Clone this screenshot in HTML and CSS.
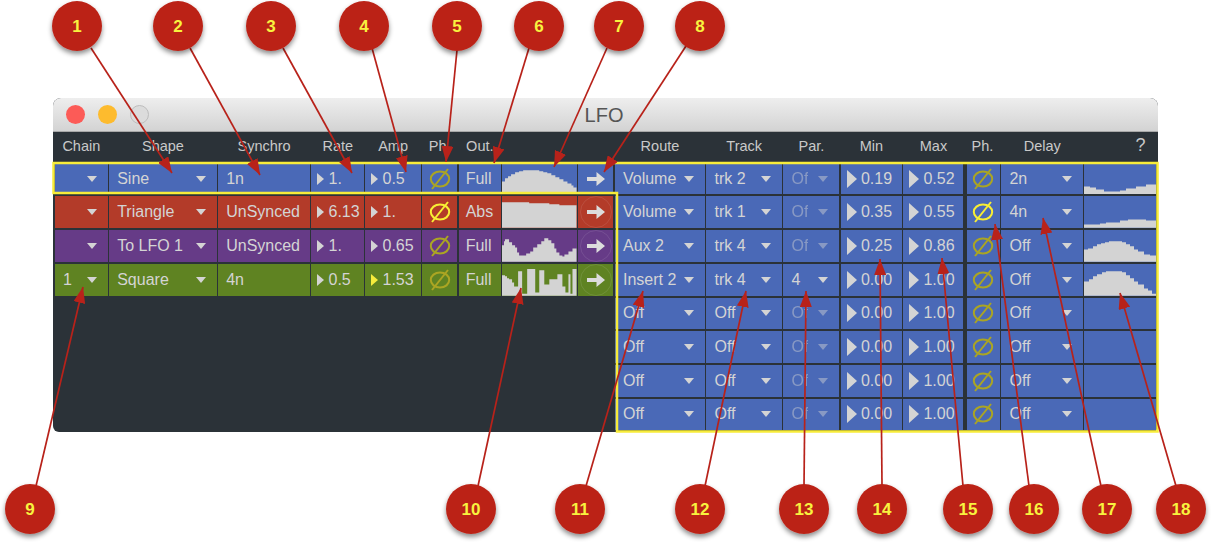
FILE: index.html
```html
<!DOCTYPE html>
<html lang="en">
<head>
    <meta charset="UTF-8">
    <title>LFO</title>
    <link rel="stylesheet" href="styles.css">
</head>
<body>
    <svg class="defs">
        <symbol id="phase" viewBox="0 0 22 22">
            <ellipse cx="11" cy="11" rx="9.2" ry="7.6" fill="none" stroke="currentColor" stroke-width="2"/>
            <line x1="3" y1="21" x2="19" y2="1" stroke="currentColor" stroke-width="2"/>
        </symbol>
        <symbol id="arrow" viewBox="0 0 18 14">
            <path d="M0 5H9.5V0L18 7L9.5 14V9H0Z" fill="currentColor"/>
        </symbol>
    </svg>

    <div class="window">
        <div class="titlebar">
            <span class="light light-red"></span>
            <span class="light light-yellow"></span>
            <span class="light light-off"></span>
            <span class="title">LFO</span>
        </div>
        <div class="panes">
            <div class="grid grid-left">
                <div class="head">Chain</div>
                <div class="head">Shape</div>
                <div class="head">Synchro</div>
                <div class="head">Rate</div>
                <div class="head">Amp</div>
                <div class="head">Ph.</div>
                <div class="head">Out.</div>
                <div class="head"></div>
                <div class="head"></div>

                <div class="cell blue drop"><span></span><i class="tri"></i></div>
                <div class="cell blue drop"><span>Sine</span><i class="tri"></i></div>
                <div class="cell blue"><span>1n</span></div>
                <div class="cell blue num"><i class="play"></i><span>1.</span></div>
                <div class="cell blue num"><i class="play"></i><span>0.5</span></div>
                <div class="cell blue ph"><svg class="ph-icon"><use href="#phase"/></svg></div>
                <div class="cell blue out"><span>Full</span></div>
                <div class="cell blue graph"><svg viewBox="0 0 74 31" preserveAspectRatio="none"><path d="M0 31V18H3V15H6V13H9V11H13V9H17V8H21V7H37V8H41V9H45V10H49V12H53V14H57V16H61V18H65V20H69V22H71V24H74V31Z"/></svg></div>
                <div class="cell blue send"><svg class="send-icon"><use href="#arrow"/></svg></div>

                <div class="cell red drop"><span></span><i class="tri"></i></div>
                <div class="cell red drop"><span>Triangle</span><i class="tri"></i></div>
                <div class="cell red"><span>UnSynced</span></div>
                <div class="cell red num"><i class="play"></i><span>6.13</span></div>
                <div class="cell red num"><i class="play"></i><span>1.</span></div>
                <div class="cell red ph on"><svg class="ph-icon"><use href="#phase"/></svg></div>
                <div class="cell red out"><span>Abs</span></div>
                <div class="cell red graph"><svg viewBox="0 0 74 31" preserveAspectRatio="none"><path d="M0 31V6H27V7H47V8H57V9H74V31Z"/></svg></div>
                <div class="cell red send ring"><svg class="send-icon"><use href="#arrow"/></svg></div>

                <div class="cell purple drop"><span></span><i class="tri"></i></div>
                <div class="cell purple drop"><span>To LFO 1</span><i class="tri"></i></div>
                <div class="cell purple"><span>UnSynced</span></div>
                <div class="cell purple num"><i class="play"></i><span>1.</span></div>
                <div class="cell purple num"><i class="play"></i><span>0.65</span></div>
                <div class="cell purple ph"><svg class="ph-icon"><use href="#phase"/></svg></div>
                <div class="cell purple out"><span>Full</span></div>
                <div class="cell purple graph"><svg viewBox="0 0 74 31" preserveAspectRatio="none"><path d="M0 31V15H2V11H3V9H7V12H10V15H13V17H15V22H17V25H24V23H28V21H31V17H35V14H39V11H42V8H46V10H49V13H52V18H54V22H57V25H60V26H62V24H66V21H70V18H74V31Z"/></svg></div>
                <div class="cell purple send ring"><svg class="send-icon"><use href="#arrow"/></svg></div>

                <div class="cell green drop"><span>1</span><i class="tri"></i></div>
                <div class="cell green drop"><span>Square</span><i class="tri"></i></div>
                <div class="cell green"><span>4n</span></div>
                <div class="cell green num"><i class="play"></i><span>0.5</span></div>
                <div class="cell green num"><i class="play play-on"></i><span>1.53</span></div>
                <div class="cell green ph"><svg class="ph-icon"><use href="#phase"/></svg></div>
                <div class="cell green out"><span>Full</span></div>
                <div class="cell green graph"><svg viewBox="0 0 74 31" preserveAspectRatio="none"><path d="M0 31V11H3V12H5V14H7V15H10V18H12V22H16V7H20V29H25V5H33V28H37V6H42V20H47V15H55V10H60V22H63V28H66V10H68V29H70V5H74V31Z"/></svg></div>
                <div class="cell green send ring"><svg class="send-icon"><use href="#arrow"/></svg></div>
            </div>

            <div class="grid grid-right">
                <div class="head">Route</div>
                <div class="head">Track</div>
                <div class="head">Par.</div>
                <div class="head">Min</div>
                <div class="head">Max</div>
                <div class="head">Ph.</div>
                <div class="head">Delay</div>
                <div class="head head-help">?</div>

                <div class="cell blue drop"><span>Volume</span><i class="tri"></i></div>
                <div class="cell blue drop"><span>trk 2</span><i class="tri"></i></div>
                <div class="cell blue drop dim"><span>Of</span><i class="tri"></i></div>
                <div class="cell blue num big"><i class="play"></i><span>0.19</span></div>
                <div class="cell blue num big"><i class="play"></i><span>0.52</span></div>
                <div class="cell blue ph ph-wide"><svg class="ph-icon"><use href="#phase"/></svg></div>
                <div class="cell blue drop"><span>2n</span><i class="tri"></i></div>
                <div class="cell blue graph"><svg viewBox="0 0 72 31" preserveAspectRatio="none"><path d="M0 31V23H6V24H12V26H20V28H36V27H42V25H52V23H62V21H72V31Z"/></svg></div>

                <div class="cell blue drop"><span>Volume</span><i class="tri"></i></div>
                <div class="cell blue drop"><span>trk 1</span><i class="tri"></i></div>
                <div class="cell blue drop dim"><span>Of</span><i class="tri"></i></div>
                <div class="cell blue num big"><i class="play"></i><span>0.35</span></div>
                <div class="cell blue num big"><i class="play"></i><span>0.55</span></div>
                <div class="cell blue ph ph-wide on"><svg class="ph-icon"><use href="#phase"/></svg></div>
                <div class="cell blue drop"><span>4n</span><i class="tri"></i></div>
                <div class="cell blue graph"><svg viewBox="0 0 72 31" preserveAspectRatio="none"><path d="M0 31V28H16V27H22V26H36V24H44V23H62V24H72V31Z"/></svg></div>

                <div class="cell blue drop"><span>Aux 2</span><i class="tri"></i></div>
                <div class="cell blue drop"><span>trk 4</span><i class="tri"></i></div>
                <div class="cell blue drop dim"><span>Of</span><i class="tri"></i></div>
                <div class="cell blue num big"><i class="play"></i><span>0.25</span></div>
                <div class="cell blue num big"><i class="play"></i><span>0.86</span></div>
                <div class="cell blue ph ph-wide"><svg class="ph-icon"><use href="#phase"/></svg></div>
                <div class="cell blue drop"><span>Off</span><i class="tri"></i></div>
                <div class="cell blue graph"><svg viewBox="0 0 72 31" preserveAspectRatio="none"><path d="M0 31V19H4V18H9V16H13V14H17V13H21V12H25V11H38V12H42V14H46V16H50V19H54V21H60V24H66V25H72V31Z"/></svg></div>

                <div class="cell blue drop"><span>Insert 2</span><i class="tri"></i></div>
                <div class="cell blue drop"><span>trk 4</span><i class="tri"></i></div>
                <div class="cell blue drop"><span>4</span><i class="tri"></i></div>
                <div class="cell blue num big"><i class="play"></i><span>0.00</span></div>
                <div class="cell blue num big"><i class="play"></i><span>1.00</span></div>
                <div class="cell blue ph ph-wide"><svg class="ph-icon"><use href="#phase"/></svg></div>
                <div class="cell blue drop"><span>Off</span><i class="tri"></i></div>
                <div class="cell blue graph"><svg viewBox="0 0 72 31" preserveAspectRatio="none"><path d="M0 31V17H5V15H9V12H13V10H18V8H22V7H38V8H42V11H46V14H50V17H54V20H60V24H64V26H68V29H72V31Z"/></svg></div>

                <div class="cell blue drop"><span>Off</span><i class="tri"></i></div>
                <div class="cell blue drop"><span>Off</span><i class="tri"></i></div>
                <div class="cell blue drop dim"><span>Of</span><i class="tri"></i></div>
                <div class="cell blue num big"><i class="play"></i><span>0.00</span></div>
                <div class="cell blue num big"><i class="play"></i><span>1.00</span></div>
                <div class="cell blue ph ph-wide"><svg class="ph-icon"><use href="#phase"/></svg></div>
                <div class="cell blue drop"><span>Off</span><i class="tri"></i></div>
                <div class="cell blue"></div>

                <div class="cell blue drop"><span>Off</span><i class="tri"></i></div>
                <div class="cell blue drop"><span>Off</span><i class="tri"></i></div>
                <div class="cell blue drop dim"><span>Of</span><i class="tri"></i></div>
                <div class="cell blue num big"><i class="play"></i><span>0.00</span></div>
                <div class="cell blue num big"><i class="play"></i><span>1.00</span></div>
                <div class="cell blue ph ph-wide"><svg class="ph-icon"><use href="#phase"/></svg></div>
                <div class="cell blue drop"><span>Off</span><i class="tri"></i></div>
                <div class="cell blue"></div>

                <div class="cell blue drop"><span>Off</span><i class="tri"></i></div>
                <div class="cell blue drop"><span>Off</span><i class="tri"></i></div>
                <div class="cell blue drop dim"><span>Of</span><i class="tri"></i></div>
                <div class="cell blue num big"><i class="play"></i><span>0.00</span></div>
                <div class="cell blue num big"><i class="play"></i><span>1.00</span></div>
                <div class="cell blue ph ph-wide"><svg class="ph-icon"><use href="#phase"/></svg></div>
                <div class="cell blue drop"><span>Off</span><i class="tri"></i></div>
                <div class="cell blue"></div>

                <div class="cell blue drop"><span>Off</span><i class="tri"></i></div>
                <div class="cell blue drop"><span>Off</span><i class="tri"></i></div>
                <div class="cell blue drop dim"><span>Of</span><i class="tri"></i></div>
                <div class="cell blue num big"><i class="play"></i><span>0.00</span></div>
                <div class="cell blue num big"><i class="play"></i><span>1.00</span></div>
                <div class="cell blue ph ph-wide"><svg class="ph-icon"><use href="#phase"/></svg></div>
                <div class="cell blue drop"><span>Off</span><i class="tri"></i></div>
                <div class="cell blue"></div>
            </div>
        </div>
    </div>

    <!-- callouts lie over the window -->
    <svg class="callouts" viewBox="0 0 1211 542">
        <defs>
            <marker id="head" viewBox="0 0 16 12" refX="16" refY="6" markerWidth="16" markerHeight="12" markerUnits="userSpaceOnUse" orient="auto">
                <path d="M0 0L16 6L0 12Z" class="head-fill"/>
            </marker>
            <filter id="shadow" x="-30%" y="-30%" width="160%" height="170%">
                <feDropShadow dx="0" dy="3" stdDeviation="2.5" flood-color="#000" flood-opacity="0.45"/>
            </filter>
        </defs>

        <path class="outline" d="M53.5 163H1157.5V431.5H617V193H53.5Z"/>

        <g class="leaders">
            <line x1="91" y1="48" x2="172" y2="173" marker-end="url(#head)"/>
            <line x1="190" y1="48" x2="260" y2="175" marker-end="url(#head)"/>
            <line x1="283" y1="48" x2="352" y2="173" marker-end="url(#head)"/>
            <line x1="372" y1="48" x2="406" y2="172" marker-end="url(#head)"/>
            <line x1="457" y1="50" x2="446" y2="162" marker-end="url(#head)"/>
            <line x1="529" y1="48" x2="494" y2="163" marker-end="url(#head)"/>
            <line x1="607" y1="48" x2="554" y2="167" marker-end="url(#head)"/>
            <line x1="686" y1="46" x2="604" y2="172" marker-end="url(#head)"/>
            <line x1="36" y1="486" x2="83" y2="287" marker-end="url(#head)"/>
            <line x1="478" y1="486" x2="521" y2="288" marker-end="url(#head)"/>
            <line x1="586" y1="486" x2="643" y2="291" marker-end="url(#head)"/>
            <line x1="705" y1="486" x2="746" y2="291" marker-end="url(#head)"/>
            <line x1="804" y1="486" x2="806" y2="291" marker-end="url(#head)"/>
            <line x1="882" y1="486" x2="880" y2="259" marker-end="url(#head)"/>
            <line x1="963" y1="486" x2="942" y2="258" marker-end="url(#head)"/>
            <line x1="1029" y1="486" x2="995" y2="224" marker-end="url(#head)"/>
            <line x1="1101" y1="486" x2="1043" y2="218" marker-end="url(#head)"/>
            <line x1="1176" y1="486" x2="1120" y2="293" marker-end="url(#head)"/>
        </g>

        <g class="badges" filter="url(#shadow)">
            <circle cx="77" cy="26" r="25"/><circle cx="178" cy="26" r="25"/>
            <circle cx="271" cy="26" r="25"/><circle cx="364" cy="26" r="25"/>
            <circle cx="457" cy="26" r="25"/><circle cx="539" cy="26" r="25"/>
            <circle cx="619" cy="26" r="25"/><circle cx="700" cy="26" r="25"/>
            <circle cx="30" cy="509" r="25"/><circle cx="471" cy="509" r="25"/>
            <circle cx="580" cy="509" r="25"/><circle cx="700" cy="509" r="25"/>
            <circle cx="804" cy="509" r="25"/><circle cx="882" cy="509" r="25"/>
            <circle cx="968" cy="509" r="25"/><circle cx="1034" cy="509" r="25"/>
            <circle cx="1107" cy="509" r="25"/><circle cx="1181" cy="509" r="25"/>
        </g>

        <g class="badge-text">
            <text x="77" y="32">1</text><text x="178" y="32">2</text>
            <text x="271" y="32">3</text><text x="364" y="32">4</text>
            <text x="457" y="32">5</text><text x="539" y="32">6</text>
            <text x="619" y="32">7</text><text x="700" y="32">8</text>
            <text x="30" y="515">9</text><text x="471" y="515">10</text>
            <text x="580" y="515">11</text><text x="700" y="515">12</text>
            <text x="804" y="515">13</text><text x="882" y="515">14</text>
            <text x="968" y="515">15</text><text x="1034" y="515">16</text>
            <text x="1107" y="515">17</text><text x="1181" y="515">18</text>
        </g>
    </svg>
</body>
</html>
```

FILE: styles.css
```css
html, body {
    margin: 0;
    height: 542px;
    overflow: hidden;
    background: #fff;
}
body {
    padding: 98px 0 0 53px;
    box-sizing: border-box;
    font-family: "Liberation Sans", Arial, sans-serif;
    position: relative;
}
.defs {
    display: none;
}
.window {
    width: 1105px;
    height: 334px;
    border-radius: 8px 8px 6px 6px;
    background: #2b3238;
    overflow: hidden;
}
.titlebar {
    height: 34px;
    box-sizing: border-box;
    padding-left: 13px;
    display: flex;
    align-items: center;
    gap: 13px;
    position: relative;
    background: linear-gradient(#eeeeee, #d3d3d3);
    border-bottom: 1px solid #a8a8a8;
}
.light {
    width: 19px;
    height: 19px;
    border-radius: 50%;
    box-sizing: border-box;
}
.light-red {
    background: #fc5b57;
}
.light-yellow {
    background: #fdbb2e;
}
.light-off {
    background: #dcdcdc;
    border: 1px solid #bdbdbd;
}
.title {
    position: absolute;
    left: 0;
    right: 3px;
    top: 6px;
    text-align: center;
    font-size: 20px;
    color: #555;
}
.panes {
    display: flex;
    gap: 1.5px;
    padding-left: 2px;
}
.grid {
    display: grid;
    column-gap: 1.5px;
    row-gap: 2px;
    grid-template-rows: 28.8px repeat(8, 31.7px);
    grid-auto-rows: 31.7px;
}
.grid-left {
    grid-template-columns: 52.7px 107.5px 91.8px 52.5px 55.2px 35px 42.3px 74.5px 35px;
}
.grid-right {
    grid-template-columns: 90px 75.5px 56px 61px 60px 35px 81.5px 72px;
}
.head {
    font-size: 14.5px;
    color: #c9c9c9;
    text-align: center;
    line-height: 29px;
}
.head-help {
    text-align: right;
    padding-right: 11px;
    font-size: 18px;
    line-height: 27px;
}
.cell {
    display: flex;
    align-items: center;
    font-size: 16px;
    color: #d4d4d4;
    padding-left: 8px;
    white-space: nowrap;
    overflow: hidden;
    min-width: 0;
}
.blue {
    background: #4a69b7;
}
.red {
    background: #b33b29;
}
.purple {
    background: #663b87;
}
.green {
    background: #5f8322;
}
.drop {
    justify-content: space-between;
    padding-right: 11px;
}
.tri {
    width: 0;
    height: 0;
    flex: none;
    border-left: 5.5px solid transparent;
    border-right: 5.5px solid transparent;
    border-top: 6px solid #d4d4d4;
}
.dim span {
    opacity: 0.45;
    width: 17px;
    overflow: hidden;
}
.dim .tri {
    opacity: 0.45;
}
.num {
    padding-left: 6px;
    gap: 4px;
}
.play {
    width: 0;
    height: 0;
    flex: none;
    border-top: 6.5px solid transparent;
    border-bottom: 6.5px solid transparent;
    border-left: 7px solid #d4d4d4;
}
.big .play {
    border-top-width: 9px;
    border-bottom-width: 9px;
    border-left-width: 10px;
}
.play-on {
    border-left-color: #f5ec3c;
}
.ph {
    padding: 0;
    justify-content: center;
    color: #aba523;
}
.ph.on {
    color: #f8ee34;
}
.ph-wide {
    margin-left: 2px;
}
.ph-icon {
    width: 22px;
    height: 22px;
}
.out {
    padding-left: 7px;
}
.graph {
    padding: 0;
}
.graph svg {
    width: 100%;
    height: 100%;
    display: block;
    fill: #d3d3d3;
}
.send {
    padding: 0;
    justify-content: center;
    color: #dcdcdc;
}
.send-icon {
    width: 18px;
    height: 14px;
}
.ring {
    position: relative;
}
.ring::before {
    content: "";
    position: absolute;
    left: 50%;
    top: 50%;
    width: 32px;
    height: 32px;
    margin: -16px 0 0 -16px;
    border: 1px solid rgba(255, 255, 255, 0.1);
    border-radius: 50%;
    box-sizing: border-box;
}
.callouts {
    position: absolute;
    left: 0;
    top: 0;
    width: 1211px;
    height: 542px;
    pointer-events: none;
}
.outline {
    fill: none;
    stroke: #f7ec3a;
    stroke-width: 2.5;
}
.leaders line {
    stroke: #b8221a;
    stroke-width: 1.7;
}
.head-fill {
    fill: #b8221a;
}
.badges circle {
    fill: #bb2418;
}
.badge-text text {
    fill: #f8f23f;
    font-family: "Liberation Sans", Arial, sans-serif;
    font-size: 17px;
    font-weight: bold;
    text-anchor: middle;
}
```
